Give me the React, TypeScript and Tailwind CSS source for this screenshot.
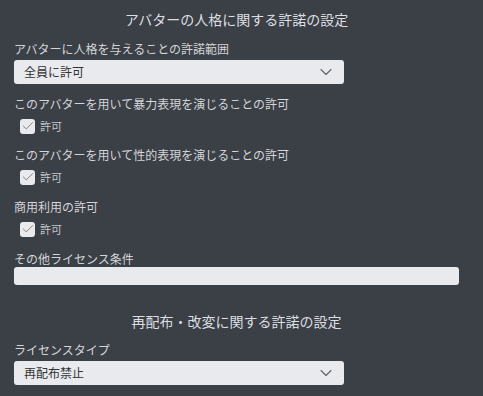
import { ChevronDown, Check } from "lucide-react";

const font = { fontFamily: '"Noto Sans CJK JP", "Noto Sans", sans-serif' };

function Label({ text, className = "" }: { text: string; className?: string }) {
  return <div className={`text-[12px] leading-4 text-[#d3d5d8] ${className}`}>{text}</div>;
}

function Select({ value, className = "" }: { value: string; className?: string }) {
  return (
    <div
      className={`flex h-[24px] w-[330px] items-center justify-between rounded-[3px] bg-[#e8eaed] pl-[10px] pr-[8px] text-[12px] text-[#333] ${className}`}
    >
      <span>{value}</span>
      <ChevronDown size={20} strokeWidth={1.4} className="text-[#666]" />
    </div>
  );
}

function Checkbox({ className = "" }: { className?: string }) {
  return (
    <div className={`ml-[6px] flex h-4 items-center gap-[5px] ${className}`}>
      <div className="flex h-[15px] w-[15px] items-center justify-center rounded-[3px] bg-[#e8eaed]">
        <Check size={14} strokeWidth={1.5} className="text-[#777]" />
      </div>
      <span className="text-[11px] leading-4 text-[#c4c7cb]">許可</span>
    </div>
  );
}

export default function App() {
  return (
    <div className="h-[396px] w-[483px] bg-[#3b3f46] pl-[14px] pr-[24px] pt-[9px]" style={font}>
      <h2 className="text-center text-[14px] leading-5 text-[#dcdee1]">アバターの人格に関する許諾の設定</h2>

      <Label text="アバターに人格を与えることの許諾範囲" className="mt-3" />
      <Select value="全員に許可" className="mt-[3px]" />

      <Label text="このアバターを用いて暴力表現を演じることの許可" className="mt-3" />
      <Checkbox className="mt-[6px]" />

      <Label text="このアバターを用いて性的表現を演じることの許可" className="mt-[13px]" />
      <Checkbox className="mt-[6px]" />

      <Label text="商用利用の許可" className="mt-[14px]" />
      <Checkbox className="mt-[6px]" />

      <Label text="その他ライセンス条件" className="mt-[14px]" />
      <div className="h-[18px] w-full rounded-[3px] bg-[#e8eaed]" />

      <h2 className="mt-[26px] text-center text-[14px] leading-5 text-[#dcdee1]">再配布・改変に関する許諾の設定</h2>

      <Label text="ライセンスタイプ" className="mt-[11px]" />
      <Select value="再配布禁止" className="mt-[3px]" />
    </div>
  );
}
